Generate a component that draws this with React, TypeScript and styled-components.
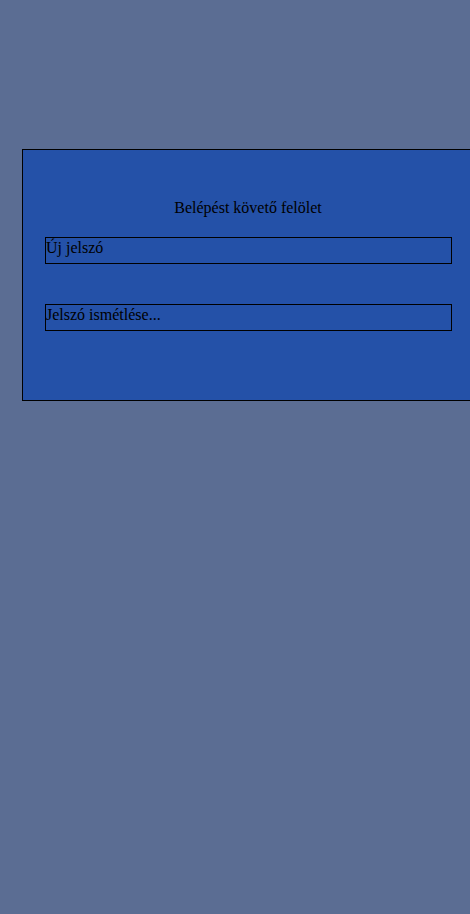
import { createGlobalStyle, styled } from "styled-components";

const GlobalStyle = createGlobalStyle`
    html, body {
        margin: 0;
        padding: 0;
        background-color: #5b6d93;
        overflow-x: hidden;
        font-family: "Liberation Serif", "Times New Roman", serif;
        font-size: 16px;
        color: #000;
    }
`;

const Page = styled.div`
    min-height: 914px;
    padding-top: 149px;
    padding-left: 22px;
    box-sizing: border-box;
`;

const Panel = styled.section`
    width: 452px;
    height: 252px;
    box-sizing: border-box;
    border: 1px solid #000;
    background-color: #2451a8;
    padding: 49px 21px 0 22px;
    display: flex;
    flex-direction: column;
`;

const Title = styled.h1`
    margin: 0 0 20px -1px;
    font-size: 16px;
    font-weight: normal;
    line-height: 18px;
    text-align: center;
`;

const Field = styled.div<{ $gapAfter?: number }>`
    height: 27px;
    box-sizing: border-box;
    border: 1px solid #000;
    margin-bottom: ${(p) => p.$gapAfter ?? 0}px;
    line-height: 18px;
    padding: 1px 0 0;
    white-space: nowrap;
    overflow: hidden;
`;

const fields = [
    { placeholder: "Új jelszó", gap: 40 },
    { placeholder: "Jelszó ismétlése...", gap: 0 },
];

const App = () => {
    return (
        <>
            <GlobalStyle />
            <Page>
                <Panel>
                    <Title>Belépést követő felölet</Title>
                    {fields.map((f) => (
                        <Field key={f.placeholder} $gapAfter={f.gap}>
                            {f.placeholder}
                        </Field>
                    ))}
                </Panel>
            </Page>
        </>
    );
};

export default App;
